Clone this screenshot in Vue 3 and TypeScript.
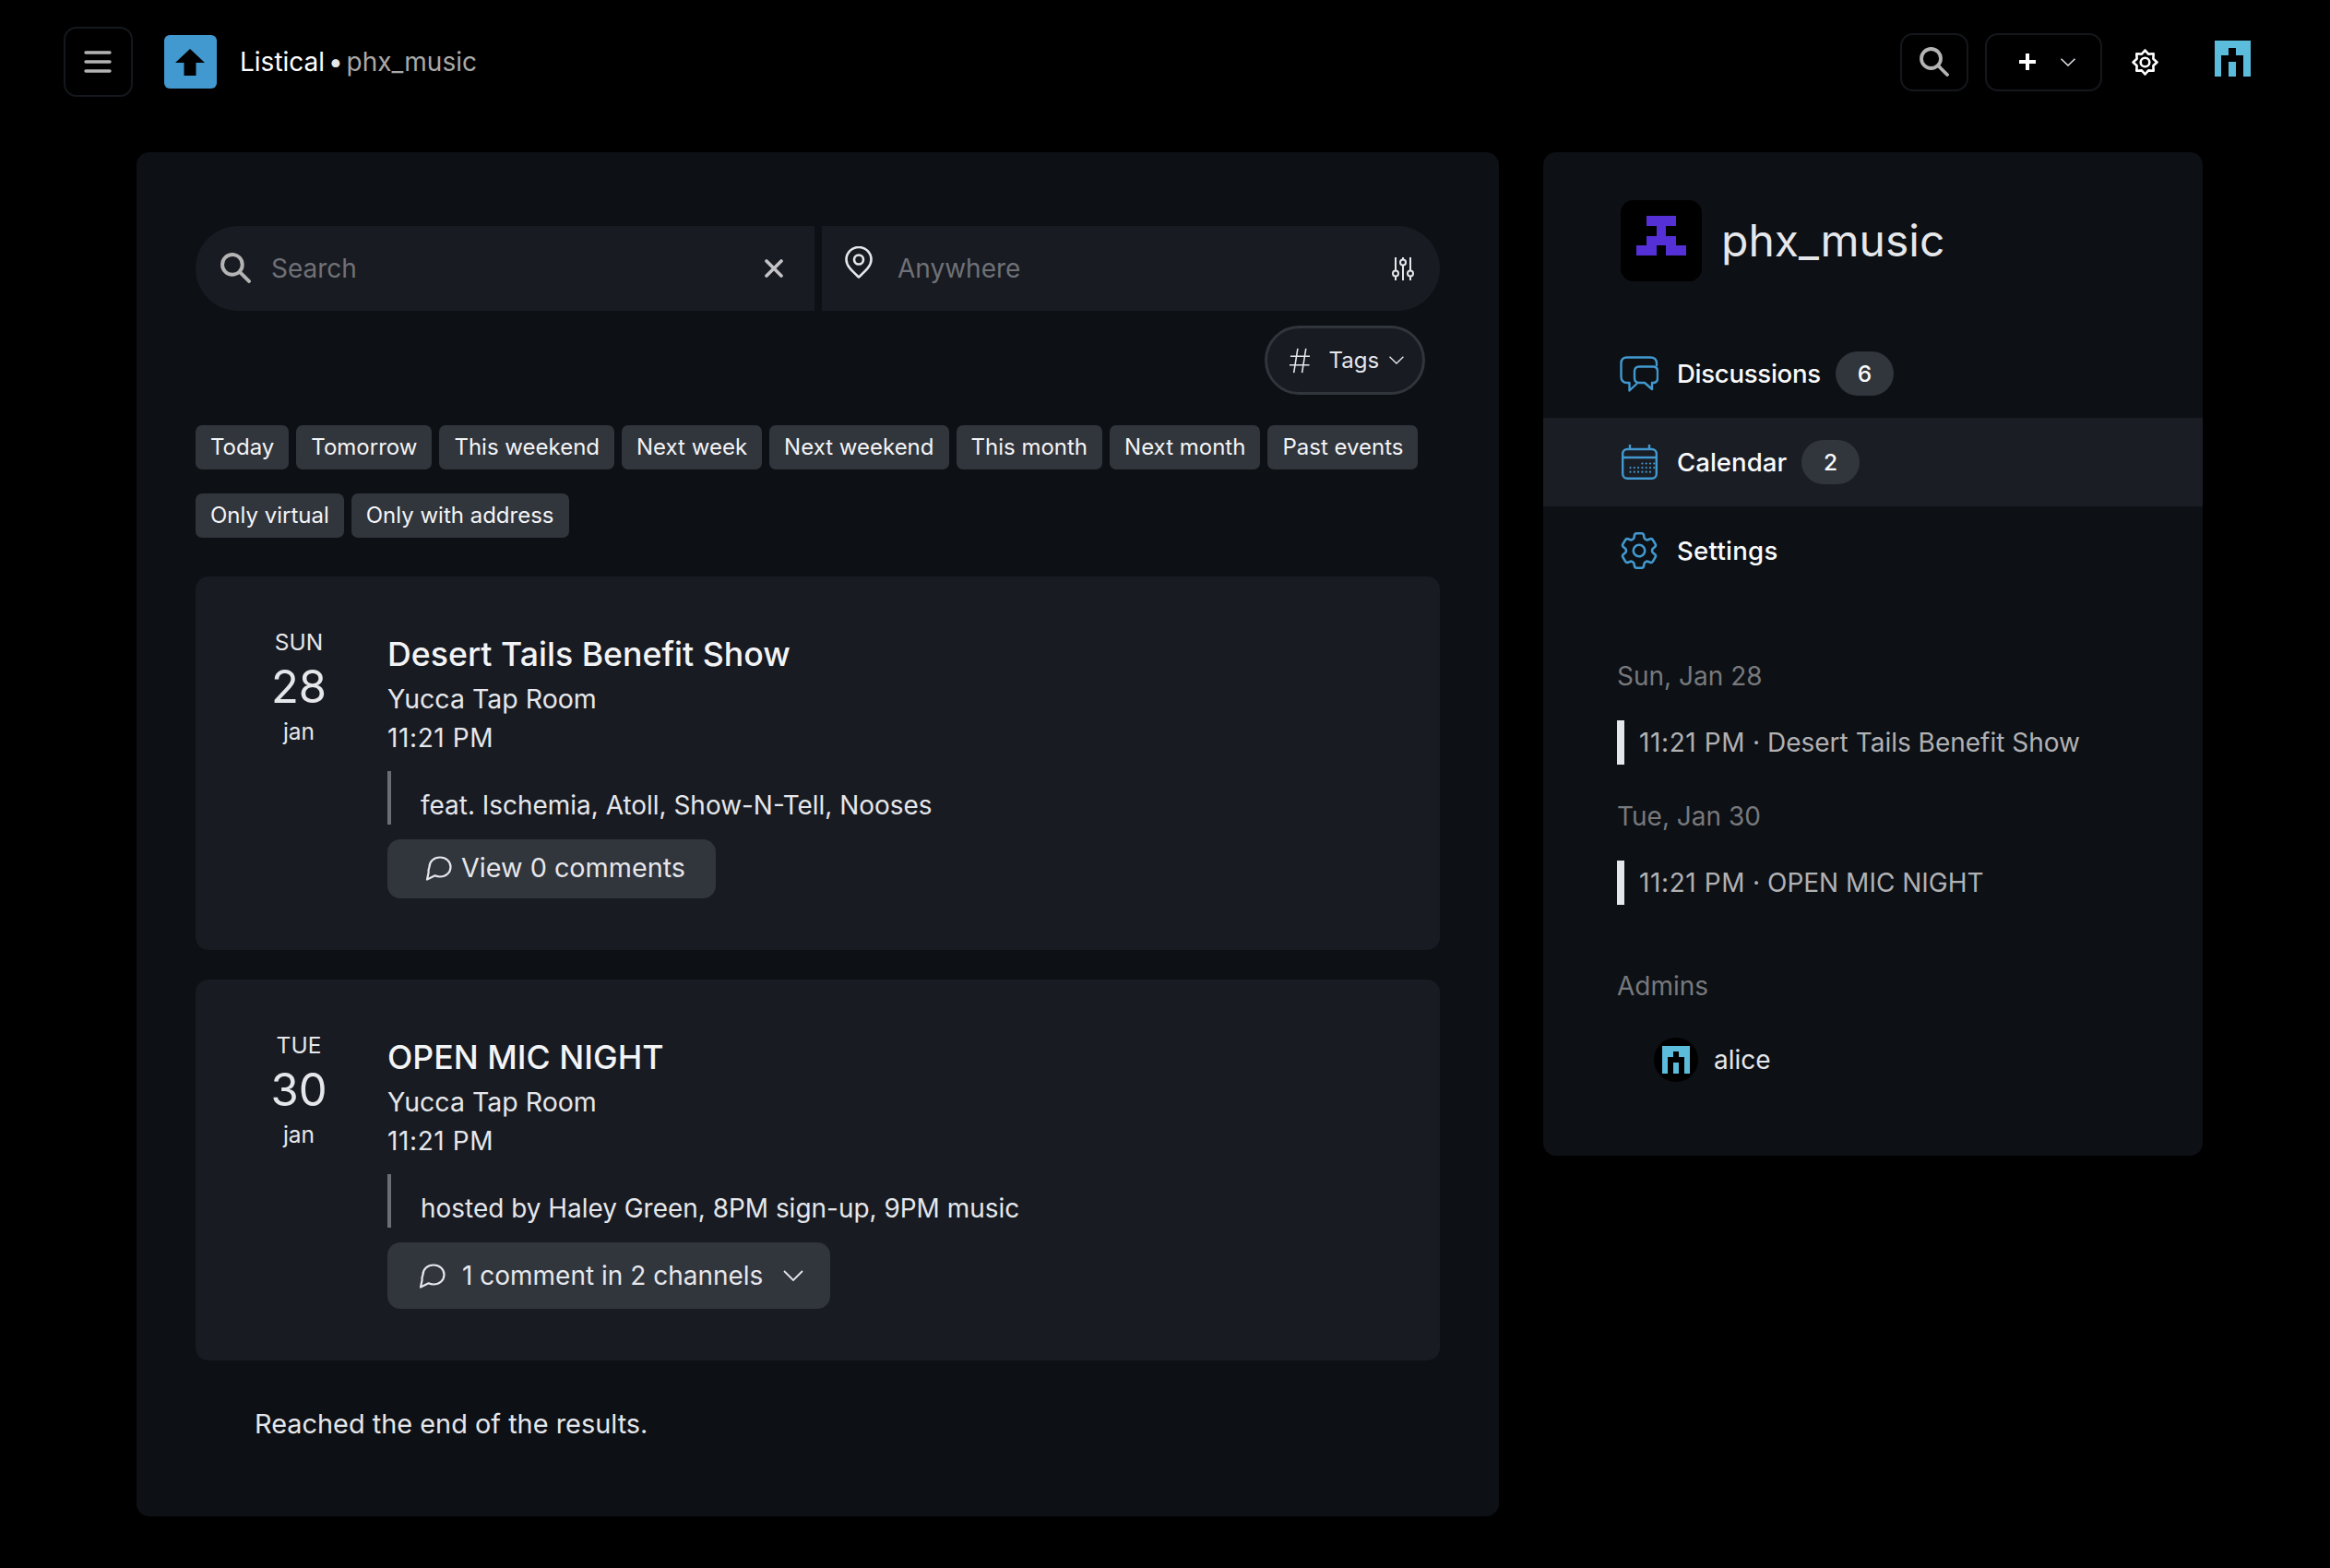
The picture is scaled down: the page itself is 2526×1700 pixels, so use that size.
<script setup lang="ts">
interface CalendarEvent {
  id: string;
  weekday: string;
  day: string;
  month: string;
  title: string;
  venue: string;
  time: string;
  note: string;
  comments: string;
  hasChannels: boolean;
  longDate: string;
}

const rangeChips = [
  "Today",
  "Tomorrow",
  "This weekend",
  "Next week",
  "Next weekend",
  "This month",
  "Next month",
  "Past events",
];
const filterChips = ["Only virtual", "Only with address"];

const events: CalendarEvent[] = [
  {
    id: "desert-tails",
    weekday: "SUN",
    day: "28",
    month: "jan",
    title: "Desert Tails Benefit Show",
    venue: "Yucca Tap Room",
    time: "11:21 PM",
    note: "feat. Ischemia, Atoll, Show-N-Tell, Nooses",
    comments: "View 0 comments",
    hasChannels: false,
    longDate: "Sun, Jan 28",
  },
  {
    id: "open-mic",
    weekday: "TUE",
    day: "30",
    month: "jan",
    title: "OPEN MIC NIGHT",
    venue: "Yucca Tap Room",
    time: "11:21 PM",
    note: "hosted by Haley Green, 8PM sign-up, 9PM music",
    comments: "1 comment in 2 channels",
    hasChannels: true,
    longDate: "Tue, Jan 30",
  },
];

// identicons are plain 5x5 grids, 1 = filled
const toCells = (rows: string[]) =>
  rows.flatMap((row, y) =>
    [...row].flatMap((cell, x) => (cell === "1" ? [{ x, y }] : [])),
  );
const aliceCells = toCells(["11111", "11011", "10001", "10101", "10101"]);
const forumCells = toCells(["01110", "00100", "01110", "11011"]);

const calendarDots = [
  ...[3, 4, 5, 6].map((col) => ({ col, row: 0 })),
  ...[0, 1, 2, 3, 4, 5, 6].map((col) => ({ col, row: 1 })),
  ...[0, 1, 2, 3, 4, 5].map((col) => ({ col, row: 2 })),
];

// eight pointed cog in the top bar
const cogPoints = Array.from({ length: 16 }, (_, i) => {
  const angle = (i * Math.PI) / 8 - Math.PI / 2;
  const radius = i % 2 === 0 ? 13 : 9.6;
  return `${(14.5 + radius * Math.cos(angle)).toFixed(2)},${(14.5 + radius * Math.sin(angle)).toFixed(2)}`;
}).join(" ");
</script>

<template>
  <div class="page">
    <header class="navbar">
      <button class="nav-menu" type="button" aria-label="Menu">
        <svg width="30" height="24" viewBox="0 0 30 24" fill="none" stroke="#b4b4b4" stroke-width="3.4" stroke-linecap="round">
          <path d="M2 2h26M2 12h26M2 22h26" />
        </svg>
      </button>
      <div class="brand-logo">
        <svg width="32" height="29" viewBox="0 0 32 29">
          <path d="M16 0 32 15H22.5V29H9.500V15H0Z" fill="#000" />
        </svg>
      </div>
      <div class="brand-text">
        <span class="brand-name">Listical</span>
        <span class="brand-dot"> • </span>
        <span class="brand-forum">phx_music</span>
      </div>
      <div class="nav-right">
        <button class="nav-btn nav-search" type="button" aria-label="Search">
          <svg width="32" height="32" viewBox="0 0 32 32" fill="none" stroke="#b4b4b4" stroke-width="3.8" stroke-linecap="round">
            <circle cx="12.500" cy="12.500" r="10.500" />
            <path d="M20.500 20.500 30 30" />
          </svg>
        </button>
        <button class="nav-btn nav-add" type="button" aria-label="Add">
          <svg width="18" height="18" viewBox="0 0 18 18" stroke="#fff" stroke-width="4">
            <path d="M9 0v18M0 9h18" />
          </svg>
          <svg width="16" height="9" viewBox="0 0 16 9" fill="none" stroke="#e5e7eb" stroke-width="1.500">
            <path d="M.5.7 8 8 15.500.7" />
          </svg>
        </button>
        <svg class="nav-cog" width="29" height="29" viewBox="0 0 29 29" fill="none" stroke="#fff" stroke-width="2.600" stroke-linejoin="round">
          <polygon :points="cogPoints" />
          <circle cx="14.500" cy="14.500" r="4.800" />
        </svg>
        <svg class="nav-avatar" width="40" height="39" viewBox="0 0 5 5" shape-rendering="crispEdges">
          <rect v-for="c in aliceCells" :key="`${c.x}-${c.y}`" :x="c.x" :y="c.y" width="1" height="1" fill="#5bbcdc" />
        </svg>
      </div>
    </header>

    <div class="content">
      <main class="events-panel">
        <div class="search-row">
          <label class="search-box search-box_left">
            <svg class="search-icon" width="33" height="33" viewBox="0 0 32 32" fill="none" stroke="#b4b4b4" stroke-width="3.800" stroke-linecap="round">
              <circle cx="12.500" cy="12.500" r="10.500" />
              <path d="M20.500 20.500 30 30" />
            </svg>
            <input class="search-input" type="text" placeholder="Search" />
            <svg width="20" height="20" viewBox="0 0 20 20" stroke="#c4c4c8" stroke-width="3.600" stroke-linecap="round">
              <path d="M2 2 18 18M18 2 2 18" />
            </svg>
          </label>
          <label class="search-box search-box_right">
            <svg class="pin-icon" width="30" height="35" viewBox="0 0 30 35" fill="none" stroke="#e5e7eb" stroke-width="2.600" stroke-linejoin="round">
              <path d="M15 33.500C8 27 1.500 21.500 1.500 14.500a13.500 13.500 0 0 1 27 0C28.500 21.500 22 27 15 33.500Z" />
              <circle cx="15" cy="14.500" r="5" />
            </svg>
            <input class="search-input" type="text" placeholder="Anywhere" />
            <svg width="24" height="25" viewBox="0 0 24 25" fill="none" stroke="#e5e7eb" stroke-width="2">
              <path d="M4 0v14M4 21v4M12 0v2M12 9v16M20 0v14M20 21v4" />
              <circle cx="4" cy="17.500" r="3" />
              <circle cx="12" cy="5.500" r="3" />
              <circle cx="20" cy="17.500" r="3" />
            </svg>
          </label>
        </div>

        <div class="tags-row">
          <button class="tags-btn" type="button">
            <svg width="24" height="28" viewBox="0 0 24 28" fill="none" stroke="#e5e7eb" stroke-width="1.700">
              <path d="M9.500 0 5 28M19 0 14.500 28M1 9h23M0 19h23" />
            </svg>
            <span>Tags</span>
            <svg width="17" height="9" viewBox="0 0 16 9" fill="none" stroke="#e5e7eb" stroke-width="1.400">
              <path d="M.5.7 8 8 15.500.7" />
            </svg>
          </button>
        </div>

        <div class="chips">
          <button v-for="chip in rangeChips" :key="chip" class="chip" type="button">{{ chip }}</button>
        </div>
        <div class="chips chips_second">
          <button v-for="chip in filterChips" :key="chip" class="chip" type="button">{{ chip }}</button>
        </div>

        <article v-for="event in events" :key="event.id" class="event-card">
          <div class="event-date">
            <div class="event-weekday">{{ event.weekday }}</div>
            <div class="event-day">{{ event.day }}</div>
            <div class="event-month">{{ event.month }}</div>
          </div>
          <div class="event-body">
            <h2 class="event-title">{{ event.title }}</h2>
            <div class="event-line">{{ event.venue }}</div>
            <div class="event-line event-time">{{ event.time }}</div>
            <blockquote class="event-note">{{ event.note }}</blockquote>
            <button :class="['comment-btn', event.hasChannels && 'comment-btn_channels']" type="button">
              <svg class="comment-icon" width="29" height="27" viewBox="0 0 29 27" fill="none" stroke="#e5e7eb" stroke-width="2.200" stroke-linejoin="round">
                <path d="M16 1.500C22.500 1.500 27.500 6 27.500 12S22.500 22.500 16 22.500c-2 0-3.800-.4-5.400-1.200L2 25.500l1.600-7.400A10.600 10.600 0 0 1 4.500 12C4.500 6 9.500 1.500 16 1.500Z" />
              </svg>
              <span>{{ event.comments }}</span>
              <svg v-if="event.hasChannels" class="comment-chevron" width="22" height="12" viewBox="0 0 22 12" fill="none" stroke="#e5e7eb" stroke-width="1.800">
                <path d="M1 1 11 11 21 1" />
              </svg>
            </button>
          </div>
        </article>

        <p class="end-note">Reached the end of the results.</p>
      </main>

      <aside class="side-panel">
        <div class="forum-head">
          <div class="forum-avatar">
            <svg width="54" height="54" viewBox="0 0 5 5" shape-rendering="crispEdges">
              <rect v-for="c in forumCells" :key="`${c.x}-${c.y}`" :x="c.x" :y="c.y" width="1" height="1" fill="#5530d6" />
            </svg>
          </div>
          <h1 class="forum-name">phx_music</h1>
        </div>

        <nav class="side-nav">
          <a class="side-link">
            <span class="side-icon">
              <svg width="42" height="39" viewBox="0 0 42 39" fill="none" stroke="#4299d0" stroke-width="2.400" stroke-linejoin="round">
                <path d="M40 11V8Q40 1.500 33 1.500H8Q1.500 1.500 1.500 8V22Q1.500 29 8 29H10.500V37.500L19 29.500" />
                <path d="M21 11.500H36Q41 11.500 41 16.500V24Q41 29 36 29H35V36L27 29H21Q16 29 16 24V16.500Q16 11.500 21 11.500Z" />
              </svg>
            </span>
            <span>Discussions</span>
            <span class="side-badge">6</span>
          </a>
          <a class="side-link side-link_active">
            <span class="side-icon">
              <svg width="39" height="38" viewBox="0 0 39 38" fill="none" stroke="#4299d0" stroke-width="2.400">
                <rect x="1.200" y="5" width="36.600" height="31.800" rx="5" />
                <path d="M1.200 14H37.800M9 0V5M30 0V5" />
                <circle
                  v-for="d in calendarDots"
                  :key="`${d.col}-${d.row}`"
                  :cx="9.500 + d.col * 4.300"
                  :cy="20.500 + d.row * 4.600"
                  r="1.100"
                  fill="#4299d0"
                  stroke="none"
                />
              </svg>
            </span>
            <span>Calendar</span>
            <span class="side-badge">2</span>
          </a>
          <a class="side-link">
            <span class="side-icon">
              <svg width="50" height="50" viewBox="0 0 24 24" fill="none" stroke="#4299d0" stroke-width="1.250" stroke-linejoin="round">
                <path d="M9.594 3.940c.090-.542.560-.940 1.110-.940h2.593c.550 0 1.020.398 1.110.940l.213 1.281c.063.374.313.686.645.870.074.040.147.083.220.127.324.196.720.257 1.075.124l1.217-.456a1.125 1.125 0 0 1 1.370.490l1.296 2.247a1.125 1.125 0 0 1-.260 1.431l-1.003.827c-.293.240-.438.613-.431.992a6.759 6.759 0 0 1 0 .255c-.007.378.138.750.430.990l1.005.828c.424.350.534.954.260 1.430l-1.298 2.247a1.125 1.125 0 0 1-1.369.491l-1.217-.456c-.355-.133-.750-.072-1.076.124a6.570 6.570 0 0 1-.220.128c-.331.183-.581.495-.644.869l-.213 1.280c-.090.543-.560.941-1.110.941h-2.594c-.550 0-1.020-.398-1.110-.940l-.213-1.281c-.062-.374-.312-.686-.644-.870a6.520 6.520 0 0 1-.220-.127c-.325-.196-.720-.257-1.076-.124l-1.217.456a1.125 1.125 0 0 1-1.369-.490l-1.297-2.247a1.125 1.125 0 0 1 .260-1.431l1.004-.827c.292-.240.437-.613.430-.992a6.932 6.932 0 0 1 0-.255c.007-.378-.138-.750-.430-.990l-1.004-.828a1.125 1.125 0 0 1-.260-1.430l1.297-2.247a1.125 1.125 0 0 1 1.370-.491l1.216.456c.356.133.751.072 1.076-.124.072-.044.146-.087.220-.128.332-.183.582-.495.644-.869l.214-1.281Z" />
                <circle cx="12" cy="12" r="3" />
              </svg>
            </span>
            <span>Settings</span>
          </a>
        </nav>

        <section class="side-events">
          <template v-for="event in events" :key="event.id">
            <h3 class="side-heading">{{ event.longDate }}</h3>
            <div class="side-event"><span class="event-time">{{ event.time }}</span> · {{ event.title }}</div>
          </template>
        </section>

        <section class="side-admins">
          <h3 class="side-heading">Admins</h3>
          <div class="admin">
            <span class="admin-avatar">
              <svg width="30" height="30" viewBox="0 0 5 5" shape-rendering="crispEdges">
                <rect v-for="c in aliceCells" :key="`${c.x}-${c.y}`" :x="c.x" :y="c.y" width="1" height="1" fill="#5bbcdc" />
              </svg>
            </span>
            <span>alice</span>
          </div>
        </section>
      </aside>
    </div>
  </div>
</template>

<style>
html,
body {
  background: #000;
}
</style>

<style scoped>
.page {
  min-height: 1700px;
  background: #000;
  color: #e5e7eb;
  font-family: Inter, "Liberation Sans", sans-serif;
  font-size: 28px;
  line-height: 42px;
}
button {
  font: inherit;
  color: inherit;
  cursor: pointer;
}
.navbar {
  display: flex;
  align-items: center;
  height: 134px;
  padding: 0 86px 0 69px;
}
.nav-menu {
  display: flex;
  align-items: center;
  justify-content: center;
  width: 75px;
  height: 76px;
  padding: 0 2px 0 0;
  background: none;
  border: 2px solid #14171c;
  border-radius: 14px;
}
.brand-logo {
  display: flex;
  align-items: center;
  justify-content: center;
  width: 57px;
  height: 58px;
  margin-left: 34px;
  padding-right: 1px;
  box-sizing: border-box;
  background: #4299d0;
  border-radius: 6px;
}
.brand-text {
  margin-left: 25px;
  white-space: pre;
}
.brand-name {
  color: #fff;
}
.brand-dot {
  color: #e5e7eb;
  word-spacing: -4px;
}
.brand-forum {
  color: #a9a9a9;
}
.nav-right {
  display: flex;
  align-items: center;
  margin-left: auto;
}
.nav-btn {
  display: flex;
  align-items: center;
  height: 63px;
  background: none;
  border: 2px solid #14171c;
  border-radius: 14px;
}
.nav-search {
  justify-content: center;
  width: 74px;
  padding: 0;
}
.nav-add {
  width: 127px;
  margin-left: 18px;
  padding: 0 27px 0 35px;
  justify-content: space-between;
}
.nav-cog {
  margin-left: 32px;
}
.nav-avatar {
  margin: 0 0 7px 60px;
}

.content {
  display: flex;
  align-items: flex-start;
  gap: 48px;
  margin-top: 31px;
  padding-left: 148px;
}
.events-panel {
  box-sizing: border-box;
  width: 1477px;
  padding: 80px 64px 79px;
  background: #0d1014;
  border-radius: 14px;
}
.search-row {
  display: flex;
  gap: 8px;
}
.search-box {
  display: flex;
  align-items: center;
  box-sizing: border-box;
  height: 92px;
  background: #181b22;
}
.search-box_left {
  width: 671px;
  padding: 0 34px 0 27px;
  border-radius: 46px 0 0 46px;
}
.search-box_right {
  width: 670px;
  padding: 0 28px 0 25px;
  border-radius: 0 46px 46px 0;
}
.search-icon {
  flex: none;
  margin-bottom: 2px;
}
.pin-icon {
  flex: none;
  margin-bottom: 14px;
}
.search-input {
  flex: 1;
  min-width: 0;
  padding: 0;
  margin-left: 22px;
  background: none;
  border: none;
  outline: none;
  color: #e5e7eb;
  font: inherit;
}
.search-box_right .search-input {
  margin-left: 27px;
}
.search-input::placeholder {
  color: #6f7176;
  opacity: 1;
}
.tags-row {
  display: flex;
  justify-content: flex-end;
  margin-top: 16px;
  padding-right: 16px;
}
.tags-btn {
  display: flex;
  align-items: center;
  box-sizing: border-box;
  width: 174px;
  height: 75px;
  padding: 0 20px 0 24px;
  background: #181b22;
  border: 3px solid #31353c;
  border-radius: 38px;
  font-size: 24px;
}
.tags-btn span {
  margin-left: 20px;
  margin-right: 11px;
}
.chips {
  display: flex;
  flex-wrap: wrap;
  gap: 8px;
  margin-top: 33px;
}
.chips_second {
  margin-top: 26px;
}
.chip {
  height: 48px;
  padding: 0 16px 1px;
  background: #31353c;
  border: none;
  border-radius: 7px;
  color: #f3f4f6;
  font-size: 24px;
  line-height: 47px;
}
.event-card {
  display: flex;
  gap: 40px;
  margin-top: 32px;
  padding: 53px 0 56px 56px;
  background: #181b22;
  border-radius: 14px;
}
.chips_second + .event-card {
  margin-top: 42px;
}
.event-date {
  flex: none;
  width: 112px;
  text-align: center;
}
.event-weekday,
.event-month {
  font-size: 24.5px;
  line-height: 36px;
}
.event-day {
  font-size: 49px;
  line-height: 61px;
}
.event-body {
  flex: 1;
  padding-top: 5px;
}
.event-title {
  margin: 0 0 1px;
  color: #f3f4f6;
  font-size: 35.7px;
  font-weight: 500;
  line-height: 53px;
}
.event-line {
  font-size: 28.5px;
}
.event-time {
  font-size: 28px;
  letter-spacing: 0.6px;
}
.event-note {
  margin: 15px 0 16px;
  padding: 16px 0 0 32px;
  border-left: 4px solid #6b6e72;
  font-size: 27.95px;
}
.comment-btn {
  display: flex;
  align-items: center;
  gap: 10px;
  height: 64px;
  padding: 0 33px 2px 41px;
  background: #31353c;
  border: none;
  border-radius: 14px;
  font-size: 28.75px;
}
.comment-btn_channels {
  gap: 18px;
  height: 72px;
  padding: 0 29px 0 34px;
  font-size: 28px;
}
.comment-icon {
  flex: none;
}
.comment-chevron {
  margin-left: 4px;
}
.end-note {
  margin: 48px 0 0;
  padding-left: 64px;
  font-size: 28.9px;
}

.side-panel {
  box-sizing: border-box;
  width: 715px;
  padding: 52px 0 80px;
  background: #0d1014;
  border-radius: 14px;
}
.forum-head {
  display: flex;
  align-items: center;
  gap: 21px;
  padding-left: 84px;
}
.forum-avatar {
  display: flex;
  justify-content: center;
  align-items: flex-start;
  box-sizing: border-box;
  width: 88px;
  height: 88px;
  padding-top: 17px;
  background: #000;
  border-radius: 14px;
}
.forum-name {
  margin: 0;
  font-size: 48px;
  font-weight: 400;
  line-height: 88px;
}
.side-nav {
  margin-top: 52px;
}
.side-link {
  display: flex;
  align-items: center;
  height: 96px;
  padding-left: 82px;
  color: #f9fafb;
  font-size: 27.6px;
  font-weight: 500;
}
.side-link:first-child {
  letter-spacing: -0.3px;
}
.side-link:last-child {
  letter-spacing: 0.25px;
}
.side-link_active {
  background: #1a1d24;
}
.side-icon {
  display: flex;
  align-items: center;
  justify-content: center;
  width: 44px;
  margin-right: 19px;
}
.side-icon svg {
  flex: none;
}
.side-badge {
  width: 63px;
  height: 48px;
  margin-left: 16px;
  background: #31353c;
  border-radius: 24px;
  font-size: 24.5px;
  line-height: 48px;
  text-align: center;
}
.side-events {
  margin-top: 67px;
  padding-left: 80px;
}
.side-heading {
  margin: 0;
  color: #77797d;
  font-size: 28px;
  font-weight: 400;
  line-height: 42px;
}
.side-event {
  margin: 27px 0 35px;
  padding-left: 16px;
  border-left: 8px solid #e5e7eb;
  color: #b0b1b5;
  line-height: 48px;
}
.side-event:last-child {
  margin-bottom: 0;
}
.side-admins {
  margin-top: 67px;
  padding-left: 80px;
}
.admin {
  display: flex;
  align-items: center;
  gap: 17px;
  height: 48px;
  margin: 35px 0 0 40px;
}
.admin-avatar {
  display: flex;
  align-items: center;
  justify-content: center;
  width: 48px;
  height: 48px;
  background: #000;
  border-radius: 50%;
}
</style>
